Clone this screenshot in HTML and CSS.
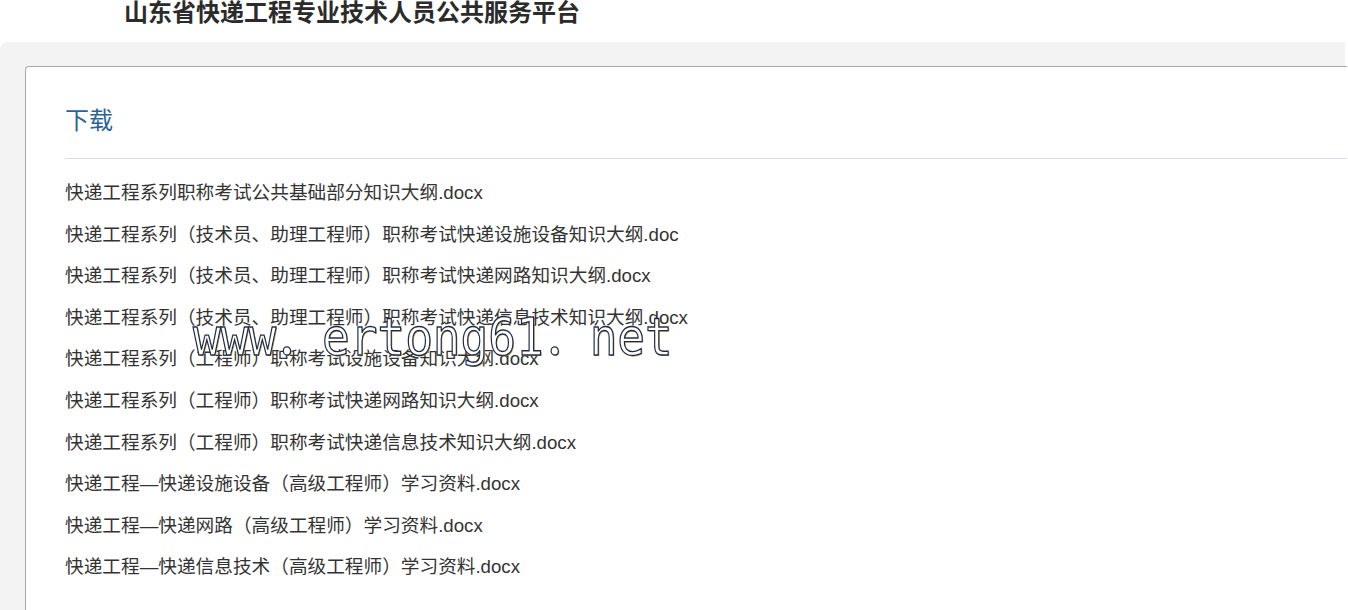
FILE: index.html
```html
<!DOCTYPE html>
<html lang="zh-CN">
<head>
    <meta charset="UTF-8">
    <meta name="viewport" content="width=device-width, initial-scale=1.0">
    <title>下载 - 山东省快递工程专业技术人员公共服务平台</title>
    <link rel="stylesheet" href="styles.css">
</head>
<body>
    <div class="shapka">
        <h1 class="shapka-title">山东省快递工程专业技术人员公共服务平台</h1>
    </div>

    <div class="fon">
        <div class="panel">
            <div class="panel-head">
                <h2>下载</h2>
            </div>
            <ul class="spisok-faylov">
                <li><a href="#">快递工程系列职称考试公共基础部分知识大纲.docx</a></li>
                <li><a href="#">快递工程系列（技术员、助理工程师）职称考试快递设施设备知识大纲.doc</a></li>
                <li><a href="#">快递工程系列（技术员、助理工程师）职称考试快递网路知识大纲.docx</a></li>
                <li><a href="#">快递工程系列（技术员、助理工程师）职称考试快递信息技术知识大纲.docx</a></li>
                <li><a href="#">快递工程系列（工程师）职称考试设施设备知识大纲.docx</a></li>
                <li><a href="#">快递工程系列（工程师）职称考试快递网路知识大纲.docx</a></li>
                <li><a href="#">快递工程系列（工程师）职称考试快递信息技术知识大纲.docx</a></li>
                <li><a href="#">快递工程—快递设施设备（高级工程师）学习资料.docx</a></li>
                <li><a href="#">快递工程—快递网路（高级工程师）学习资料.docx</a></li>
                <li><a href="#">快递工程—快递信息技术（高级工程师）学习资料.docx</a></li>
            </ul>
        </div>
    </div>

    <div class="vodyanoy-znak">www．ertong61．net</div>
</body>
</html>
```

FILE: styles.css
```css
* {
    margin: 0;
    padding: 0;
    box-sizing: border-box;
}

body {
    position: relative;
    background: #fff;
    font-family: "Liberation Sans", "Noto Sans CJK SC", sans-serif;
    color: #333;
    overflow: hidden;
}

.shapka {
    height: 42px;
    padding-left: 124px;
}

.shapka-title {
    font-size: 24px;
    line-height: 26px;
    font-weight: bold;
    color: #2b2b2b;
}

.fon {
    background: #f3f3f3;
    border-radius: 8px 0 0 0;
    margin-right: 3px;
    padding: 24px 0 0 25px;
    height: 570px;
}

.panel {
    background: #fff;
    border: 1px solid #a9a9a9;
    border-right: none;
    border-bottom: none;
    border-radius: 4px 0 0 0;
    margin-right: -2px;
    padding-left: 39px;
    height: 100%;
}

.panel-head {
    padding: 38px 0 21px;
    border-bottom: 1px solid #d8dde4;
}

.panel-head h2 {
    font-size: 18pt;
    line-height: 32px;
    font-weight: normal;
    color: #2a6496;
}

.spisok-faylov {
    list-style: none;
    margin-top: 13px;
}

.spisok-faylov li {
    font-size: 14pt;
    line-height: 41.6px;
    white-space: nowrap;
}

.spisok-faylov a {
    color: #333;
    text-decoration: none;
}

.vodyanoy-znak {
    position: absolute;
    left: 193px;
    top: 311px;
    font-family: "DejaVu Sans Mono", "Noto Sans CJK SC", monospace;
    font-size: 46px;
    line-height: 46px;
    color: #fff;
    -webkit-text-stroke: 1.2px #1d2b44;
    text-shadow: 1px 1px 0 #c8a458;
    transform: scaleY(1.12);
    transform-origin: left top;
    white-space: nowrap;
    pointer-events: none;
}
```
